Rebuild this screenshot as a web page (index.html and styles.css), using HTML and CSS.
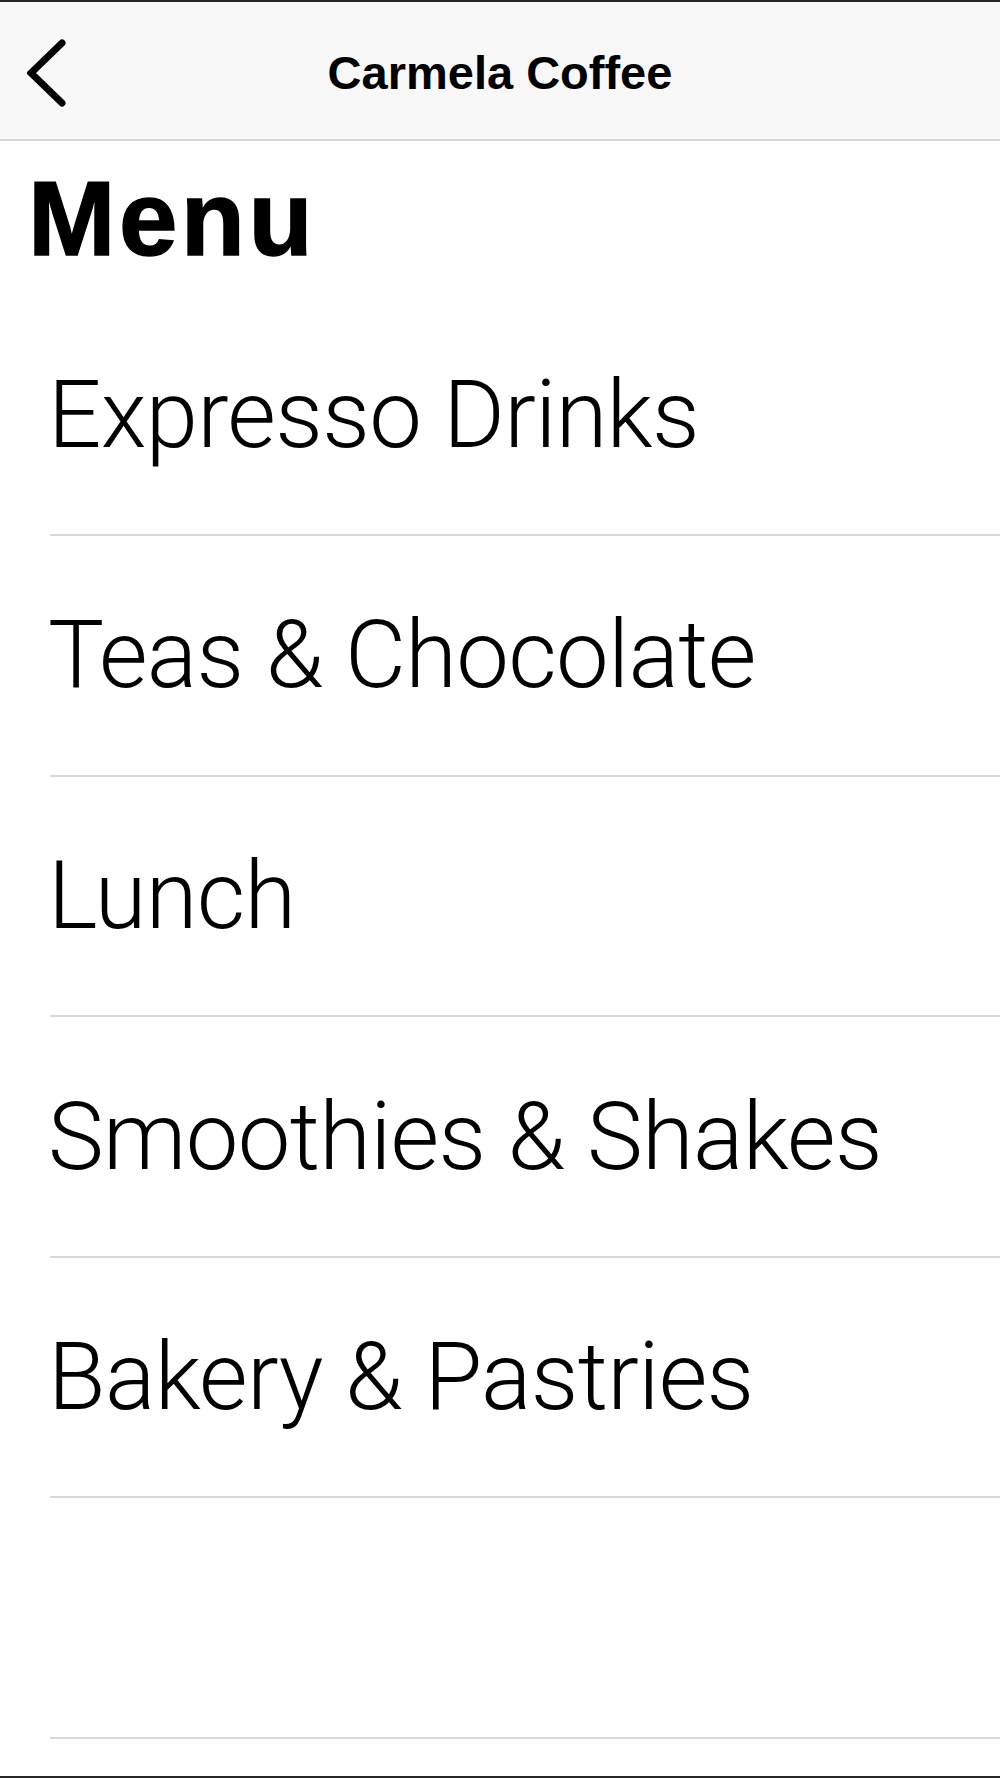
FILE: index.html
```html
<!DOCTYPE html>
<html lang="en">
<head>
<meta charset="utf-8">
<title>Carmela Coffee – Menu</title>
<link rel="stylesheet" href="styles.css">
</head>
<body>
<div class="screen">
  <header class="navbar">
    <div class="nav-left">
      <svg class="back" width="44" height="70" viewBox="0 0 44 70" aria-label="Back">
        <polyline points="35,5 4,35 35,65" fill="none" stroke="#000" stroke-width="7" stroke-linecap="round" stroke-linejoin="miter"/>
      </svg>
    </div>
    <h1 class="nav-title">Carmela Coffee</h1>
    <div class="nav-right"></div>
  </header>
  <h2 class="page-title">Menu</h2>
  <ul class="menu-list">
    <li class="menu-item"><span class="label">Expresso Drinks</span></li>
    <li class="menu-item"><span class="label">Teas &amp; Chocolate</span></li>
    <li class="menu-item"><span class="label">Lunch</span></li>
    <li class="menu-item"><span class="label">Smoothies &amp; Shakes</span></li>
    <li class="menu-item"><span class="label">Bakery &amp; Pastries</span></li>
    <li class="menu-item"><span class="label"></span></li>
  </ul>
</div>
</body>
</html>
```
FILE: styles.css
```css
* { box-sizing: border-box; }
html, body {
  margin: 0;
  padding: 0;
  background: #fff;
}
.screen {
  width: 1000px;
  height: 1778px;
  border-top: 2px solid #262626;
  border-bottom: 2px solid #262626;
  overflow: hidden;
  background: #fff;
  display: flex;
  flex-direction: column;
}
.navbar {
  height: 139px;
  flex: none;
  background: #f8f8f8;
  border-bottom: 2px solid #d4d4d4;
  display: grid;
  grid-template-columns: 1fr auto 1fr;
  align-items: center;
  padding-top: 3px;
}
.nav-left {
  padding-left: 27px;
  display: flex;
  align-items: center;
}
.back { display: block; margin-top: 1px; }
.nav-title {
  margin: 0;
  font-family: "Liberation Sans", Arial, sans-serif;
  font-weight: 700;
  font-size: 47px;
  line-height: 1;
  color: #000;
}
.page-title {
  margin: 25px 0 0 0;
  padding-left: 28px;
  height: 129.5px;
  font-family: "Liberation Sans", Arial, sans-serif;
  font-weight: 700;
  font-size: 105px;
  line-height: 105px;
  letter-spacing: 3.5px;
  -webkit-text-stroke: 1.5px #000;
  color: #000;
}
.menu-list {
  list-style: none;
  margin: 0 0 0 50px;
  padding: 0;
}
.menu-item {
  height: 240.6px;
  border-bottom: 2px solid #d9d9d9;
  display: flex;
  align-items: center;
}
.label {
  font-family: Roboto, "Liberation Sans", sans-serif;
  font-weight: 300;
  font-size: 94px;
  line-height: 1;
  letter-spacing: -0.7px;
  color: #000;
  margin-left: -2px;
}
```
